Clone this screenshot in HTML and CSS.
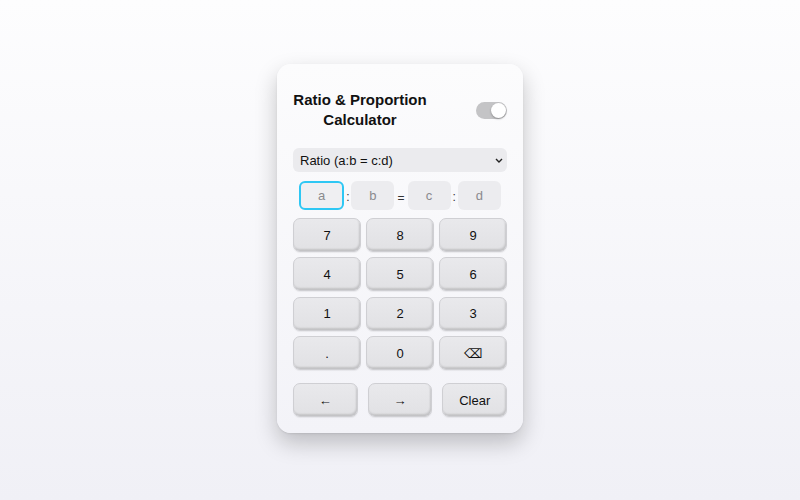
FILE: index.html
```html
<!DOCTYPE html>
<html>
<head>
<meta charset="utf-8">
<link rel="stylesheet" href="styles.css">
</head>
<body>
<div class="calc">
  <div class="header">
    <h1 class="title">Ratio &amp; Proportion Calculator</h1>
    <div class="toggle"><span class="thumb"></span></div>
  </div>
  <select class="mode">
    <option>Ratio (a:b = c:d)</option>
  </select>
  <div class="inputs">
    <input class="field focused" placeholder="a">
    <span class="sep">:</span>
    <input class="field" placeholder="b">
    <span class="sep eq">=</span>
    <input class="field" placeholder="c">
    <span class="sep">:</span>
    <input class="field" placeholder="d">
  </div>
  <div class="keypad">
    <button class="key">7</button>
    <button class="key">8</button>
    <button class="key">9</button>
    <button class="key">4</button>
    <button class="key">5</button>
    <button class="key">6</button>
    <button class="key">1</button>
    <button class="key">2</button>
    <button class="key">3</button>
    <button class="key">.</button>
    <button class="key">0</button>
    <button class="key">⌫</button>
  </div>
  <div class="actions">
    <button class="key">←</button>
    <button class="key">→</button>
    <button class="key">Clear</button>
  </div>
</div>
</body>
</html>
```

FILE: styles.css
```css
html, body {
  margin: 0;
  height: 100%;
}
body {
  background: linear-gradient(to bottom, #fdfdfe 0%, #f0f0f6 100%);
  font-family: "Liberation Sans", Arial, sans-serif;
  display: flex;
  justify-content: center;
  align-items: flex-start;
}
.calc {
  margin-top: 64px;
  width: 214px;
  padding: 16px 16px 16px;
  background: linear-gradient(to bottom, #fcfcfd, #f3f3f8);
  border-radius: 14px;
  box-shadow: 0 10px 22px rgba(0, 0, 0, 0.22), 0 1px 2px rgba(0,0,0,0.08);
  display: flex;
  flex-direction: column;
}
.header {
  display: flex;
  justify-content: space-between;
  align-items: center;
  padding-top: 10px;
}
.title {
  margin: 0;
  width: 134px;
  font-family: "Liberation Sans", Arial, sans-serif;
  font-size: 15px;
  font-weight: bold;
  line-height: 20px;
  text-align: center;
  color: #111;
}
.toggle {
  width: 31px;
  height: 17px;
  border-radius: 9px;
  background: #c4c4c6;
  display: flex;
  justify-content: flex-end;
  align-items: center;
  padding: 0 1px;
  box-sizing: border-box;
}
.thumb {
  width: 15px;
  height: 15px;
  border-radius: 50%;
  background: #fff;
  box-shadow: 0 1px 2px rgba(0,0,0,0.3);
}
.mode {
  -webkit-appearance: none;
  appearance: none;
  margin-top: 18px;
  height: 24px;
  width: 214px;
  border: none;
  border-radius: 6px;
  background-color: #ebebee;
  background-image: url("data:image/svg+xml,%3Csvg xmlns='http://www.w3.org/2000/svg' width='8' height='5' viewBox='0 0 8 5'%3E%3Cpath d='M1 1l3 3 3-3' fill='none' stroke='%23222' stroke-width='1.4'/%3E%3C/svg%3E");
  background-repeat: no-repeat;
  background-position: right 4px center;
  font-family: "Liberation Sans", Arial, sans-serif;
  font-size: 13px;
  color: #111;
  padding: 0 7px;
}
.inputs {
  margin-top: 9px;
  display: flex;
  justify-content: center;
  align-items: center;
}
.field {
  width: 43px;
  height: 29px;
  box-sizing: border-box;
  border: 2px solid transparent;
  border-radius: 6px;
  background: #ececef;
  text-align: center;
  font-family: "Liberation Sans", Arial, sans-serif;
  font-size: 13px;
  padding: 0;
  outline: none;
}
.field::placeholder {
  color: #8a8a8e;
}
.field.focused {
  width: 45px;
  border-color: #2ec7f4;
  background: #efeff2;
}
.sep {
  font-size: 12px;
  color: #333;
  margin: 0 2px;
  padding-top: 2px;
}
.sep.eq {
  margin: 0 3px;
  padding-top: 4px;
}
.keypad {
  margin-top: 8px;
  display: grid;
  grid-template-columns: repeat(3, 1fr);
  grid-auto-rows: 34px;
  column-gap: 5px;
  row-gap: 5.4px;
}
.key {
  box-sizing: border-box;
  border: 1px solid #cfcfd3;
  border-radius: 7px;
  background: linear-gradient(to bottom, #e9e9ec, #e1e1e4);
  box-shadow: inset -1px -2px 2px rgba(0,0,0,0.14), 0 1px 1px rgba(0,0,0,0.06);
  font-family: "Liberation Sans", Arial, sans-serif;
  font-size: 13px;
  color: #111;
  padding: 0;
}
.actions {
  margin-top: 13px;
  display: flex;
  gap: 10px;
}
.actions .key {
  flex: 1;
  height: 34px;
}
```
